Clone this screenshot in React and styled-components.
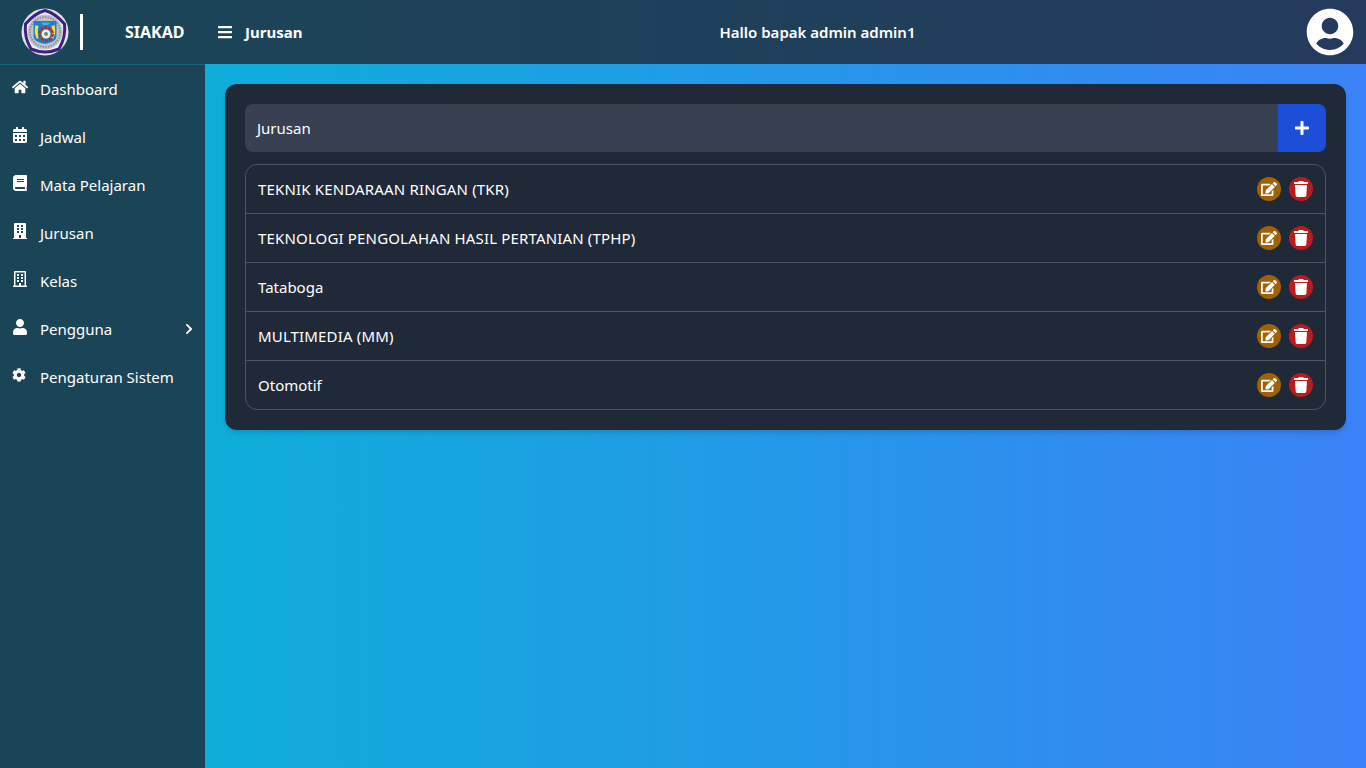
import React from "react";
import styled, { createGlobalStyle } from "styled-components";
import {
  FaBars,
  FaBook,
  FaBuilding,
  FaCalendarAlt,
  FaChevronRight,
  FaCog,
  FaEdit,
  FaHome,
  FaPlus,
  FaRegBuilding,
  FaTrash,
  FaUser,
  FaUserCircle,
} from "react-icons/fa";

const GlobalStyle = createGlobalStyle`
  * { box-sizing: border-box; }
  html, body { margin: 0; height: 100%; }
  body {
    font-family: "Noto Sans", "Open Sans", sans-serif;
    font-size: 16px;
    color: #fff;
    background: linear-gradient(to right, #06b6d4, #3b82f6);
  }
`;
const Page = styled.div`
  width: 100%;
  height: 100vh;
  display: flex;
  flex-direction: column;
  overflow: hidden;
`;
const Header = styled.header`
  height: 64px;
  flex: none;
  display: flex;
  align-items: center;
  background: rgba(31, 41, 55, 0.8);
`;
const Brand = styled.div`
  width: 205px;
  height: 100%;
  flex: none;
  display: flex;
  align-items: center;
  padding-left: 21px;
`;
const Divider = styled.div`
  width: 3px;
  height: 36px;
  margin-left: 11px;
  background: #fff;
`;
const BrandName = styled.span`
  margin-left: 42px;
  font-size: 16px;
  font-weight: 700;
`;
const PageTitle = styled.div`
  width: 370px;
  flex: none;
  display: flex;
  align-items: center;
  gap: 12px;
  padding-left: 12px;
  font-size: 15px;
  font-weight: 700;
`;
const Greeting = styled.div`
  flex: 1;
  padding-right: 246px;
  text-align: center;
  font-size: 15px;
  font-weight: 600;
`;
const Avatar = styled.div`
  display: flex;
  margin-right: 12px;
  border-radius: 50%;
`;
const Body = styled.div`
  flex: 1;
  display: flex;
  min-height: 0;
`;
const Sidebar = styled.nav`
  width: 205px;
  flex: none;
  background: rgba(31, 41, 55, 0.8);
  border-top: 1px solid rgba(6, 182, 212, 0.3);
`;
const NavItem = styled.a`
  height: 48px;
  display: flex;
  align-items: center;
  padding-left: 12px;
  color: #fff;
  font-size: 15px;
`;
const NavIcon = styled.span`
  width: 28px;
  flex: none;
  display: flex;
  margin-top: -4px;
`;
const NavLabel = styled.span`
  flex: 1;
`;
const NavArrow = styled.span`
  display: flex;
  margin-right: 10px;
`;
const Main = styled.main`
  flex: 1;
  padding: 20px;
`;
const Card = styled.section`
  padding: 20px;
  border-radius: 12px;
  background: #1f2937;
  box-shadow: 0 4px 6px -1px rgba(0, 0, 0, 0.1), 0 2px 4px -2px rgba(0, 0, 0, 0.1);
`;
const SearchRow = styled.div`
  height: 48px;
  display: flex;
  margin-bottom: 12px;
`;
const SearchLabel = styled.div`
  flex: 1;
  display: flex;
  align-items: center;
  padding-left: 12px;
  border-radius: 8px 0 0 8px;
  background: #374151;
  font-size: 15px;
`;
const AddButton = styled.button`
  width: 48px;
  display: flex;
  align-items: center;
  justify-content: center;
  border: 0;
  border-radius: 0 8px 8px 0;
  background: #1d4ed8;
  color: #fff;
`;
const List = styled.ul`
  margin: 0;
  padding: 0;
  list-style: none;
  border: 1px solid #4b5563;
  border-radius: 12px;
`;
const Row = styled.li`
  height: 49px;
  display: flex;
  align-items: center;
  justify-content: space-between;
  padding: 0 12px;
  font-size: 15px;
  &:not(:last-child) {
    border-bottom: 1px solid #4b5563;
  }
  &:last-child {
    height: 48px;
  }
`;
const RowName = styled.span`
  letter-spacing: ${({ $caps }) => ($caps ? "0.16px" : "0")};
`;
const Actions = styled.div`
  display: flex;
  gap: 8px;
`;
const RoundButton = styled.button`
  width: 24px;
  height: 24px;
  padding: 0;
  display: flex;
  align-items: center;
  justify-content: center;
  border: 0;
  border-radius: 50%;
  background: ${({ $tone }) => ($tone === "edit" ? "#a16207" : "#b91c1c")};
  color: #fff;
`;

const menu = [
  { label: "Dashboard", icon: FaHome, size: 16 },
  { label: "Jadwal", icon: FaCalendarAlt, size: 16 },
  { label: "Mata Pelajaran", icon: FaBook, size: 16 },
  { label: "Jurusan", icon: FaBuilding, size: 16 },
  { label: "Kelas", icon: FaRegBuilding, size: 16 },
  { label: "Pengguna", icon: FaUser, size: 16, arrow: true },
  { label: "Pengaturan Sistem", icon: FaCog, size: 14 },
];
const jurusan = [
  { name: "TEKNIK KENDARAAN RINGAN (TKR)", caps: true },
  { name: "TEKNOLOGI PENGOLAHAN HASIL PERTANIAN (TPHP)", caps: true },
  { name: "Tataboga" },
  { name: "MULTIMEDIA (MM)", caps: true },
  { name: "Otomotif" },
];

// school crest, drawn roughly from the reference
const Logo = () => (
  <svg width="48" height="48" viewBox="0 0 48 48">
    <defs>
      <filter id="soft">
        <feGaussianBlur stdDeviation="0.45" />
      </filter>
    </defs>
    <g filter="url(#soft)">
      <circle cx="24" cy="24" r="23.5" fill="#e4e1ea" />
      <path
        d="M24 2.5 Q34 5 43.5 16 Q45 29 38 41 Q24 47 10 41 Q3 29 4.5 16 Q14 5 24 2.5Z"
        fill="#f1eff5"
        stroke="#3a2382"
        strokeWidth="3"
      />
      <circle cx="24" cy="24" r="17.5" fill="#c3c4ca" />
      <circle cx="24" cy="24" r="15" fill="none" stroke="#8d8f99" strokeWidth="2" strokeDasharray="1.5 1.2" />
      <path d="M12.5 13 H35.5 V28 Q35.5 34 24 36 Q12.5 34 12.5 28Z" fill="#1b7fd1" />
      <path d="M14.5 17 Q12.5 25 16 31 L18 29.5 Q16 24 17.5 18Z" fill="#eee23a" />
      <path d="M33.5 17 Q35.5 25 32 31 L30 29.5 Q32 24 30.5 18Z" fill="#eee23a" />
      <circle cx="25" cy="26" r="6.5" fill="none" stroke="#b5302c" strokeWidth="3" strokeDasharray="3 1" />
      <circle cx="25" cy="26" r="4.5" fill="#e8eee8" />
      <circle cx="25" cy="26" r="2" fill="#4b9a68" />
      <path d="M20 14.5 H29 L27 17 H22Z" fill="#37b7d8" />
    </g>
  </svg>
);

const App = () => (
  <Page>
    <GlobalStyle />
    <Header>
      <Brand>
        <Logo />
        <Divider />
        <BrandName>SIAKAD</BrandName>
      </Brand>
      <PageTitle>
        <FaBars size={16} />
        Jurusan
      </PageTitle>
      <Greeting>Hallo bapak admin admin1</Greeting>
      <Avatar>
        <FaUserCircle size={48} />
      </Avatar>
    </Header>
    <Body>
      <Sidebar>
        {menu.map(({ label, icon: Icon, size, arrow }) => (
          <NavItem key={label}>
            <NavIcon>
              <Icon size={size} />
            </NavIcon>
            <NavLabel>{label}</NavLabel>
            {arrow && (
              <NavArrow>
                <FaChevronRight size={12} />
              </NavArrow>
            )}
          </NavItem>
        ))}
      </Sidebar>
      <Main>
        <Card>
          <SearchRow>
            <SearchLabel>Jurusan</SearchLabel>
            <AddButton>
              <FaPlus size={16} />
            </AddButton>
          </SearchRow>
          <List>
            {jurusan.map(({ name, caps }) => (
              <Row key={name}>
                <RowName $caps={caps}>{name}</RowName>
                <Actions>
                  <RoundButton $tone="edit">
                    <FaEdit size={16} />
                  </RoundButton>
                  <RoundButton $tone="delete">
                    <FaTrash size={16} />
                  </RoundButton>
                </Actions>
              </Row>
            ))}
          </List>
        </Card>
      </Main>
    </Body>
  </Page>
);

export default App;
